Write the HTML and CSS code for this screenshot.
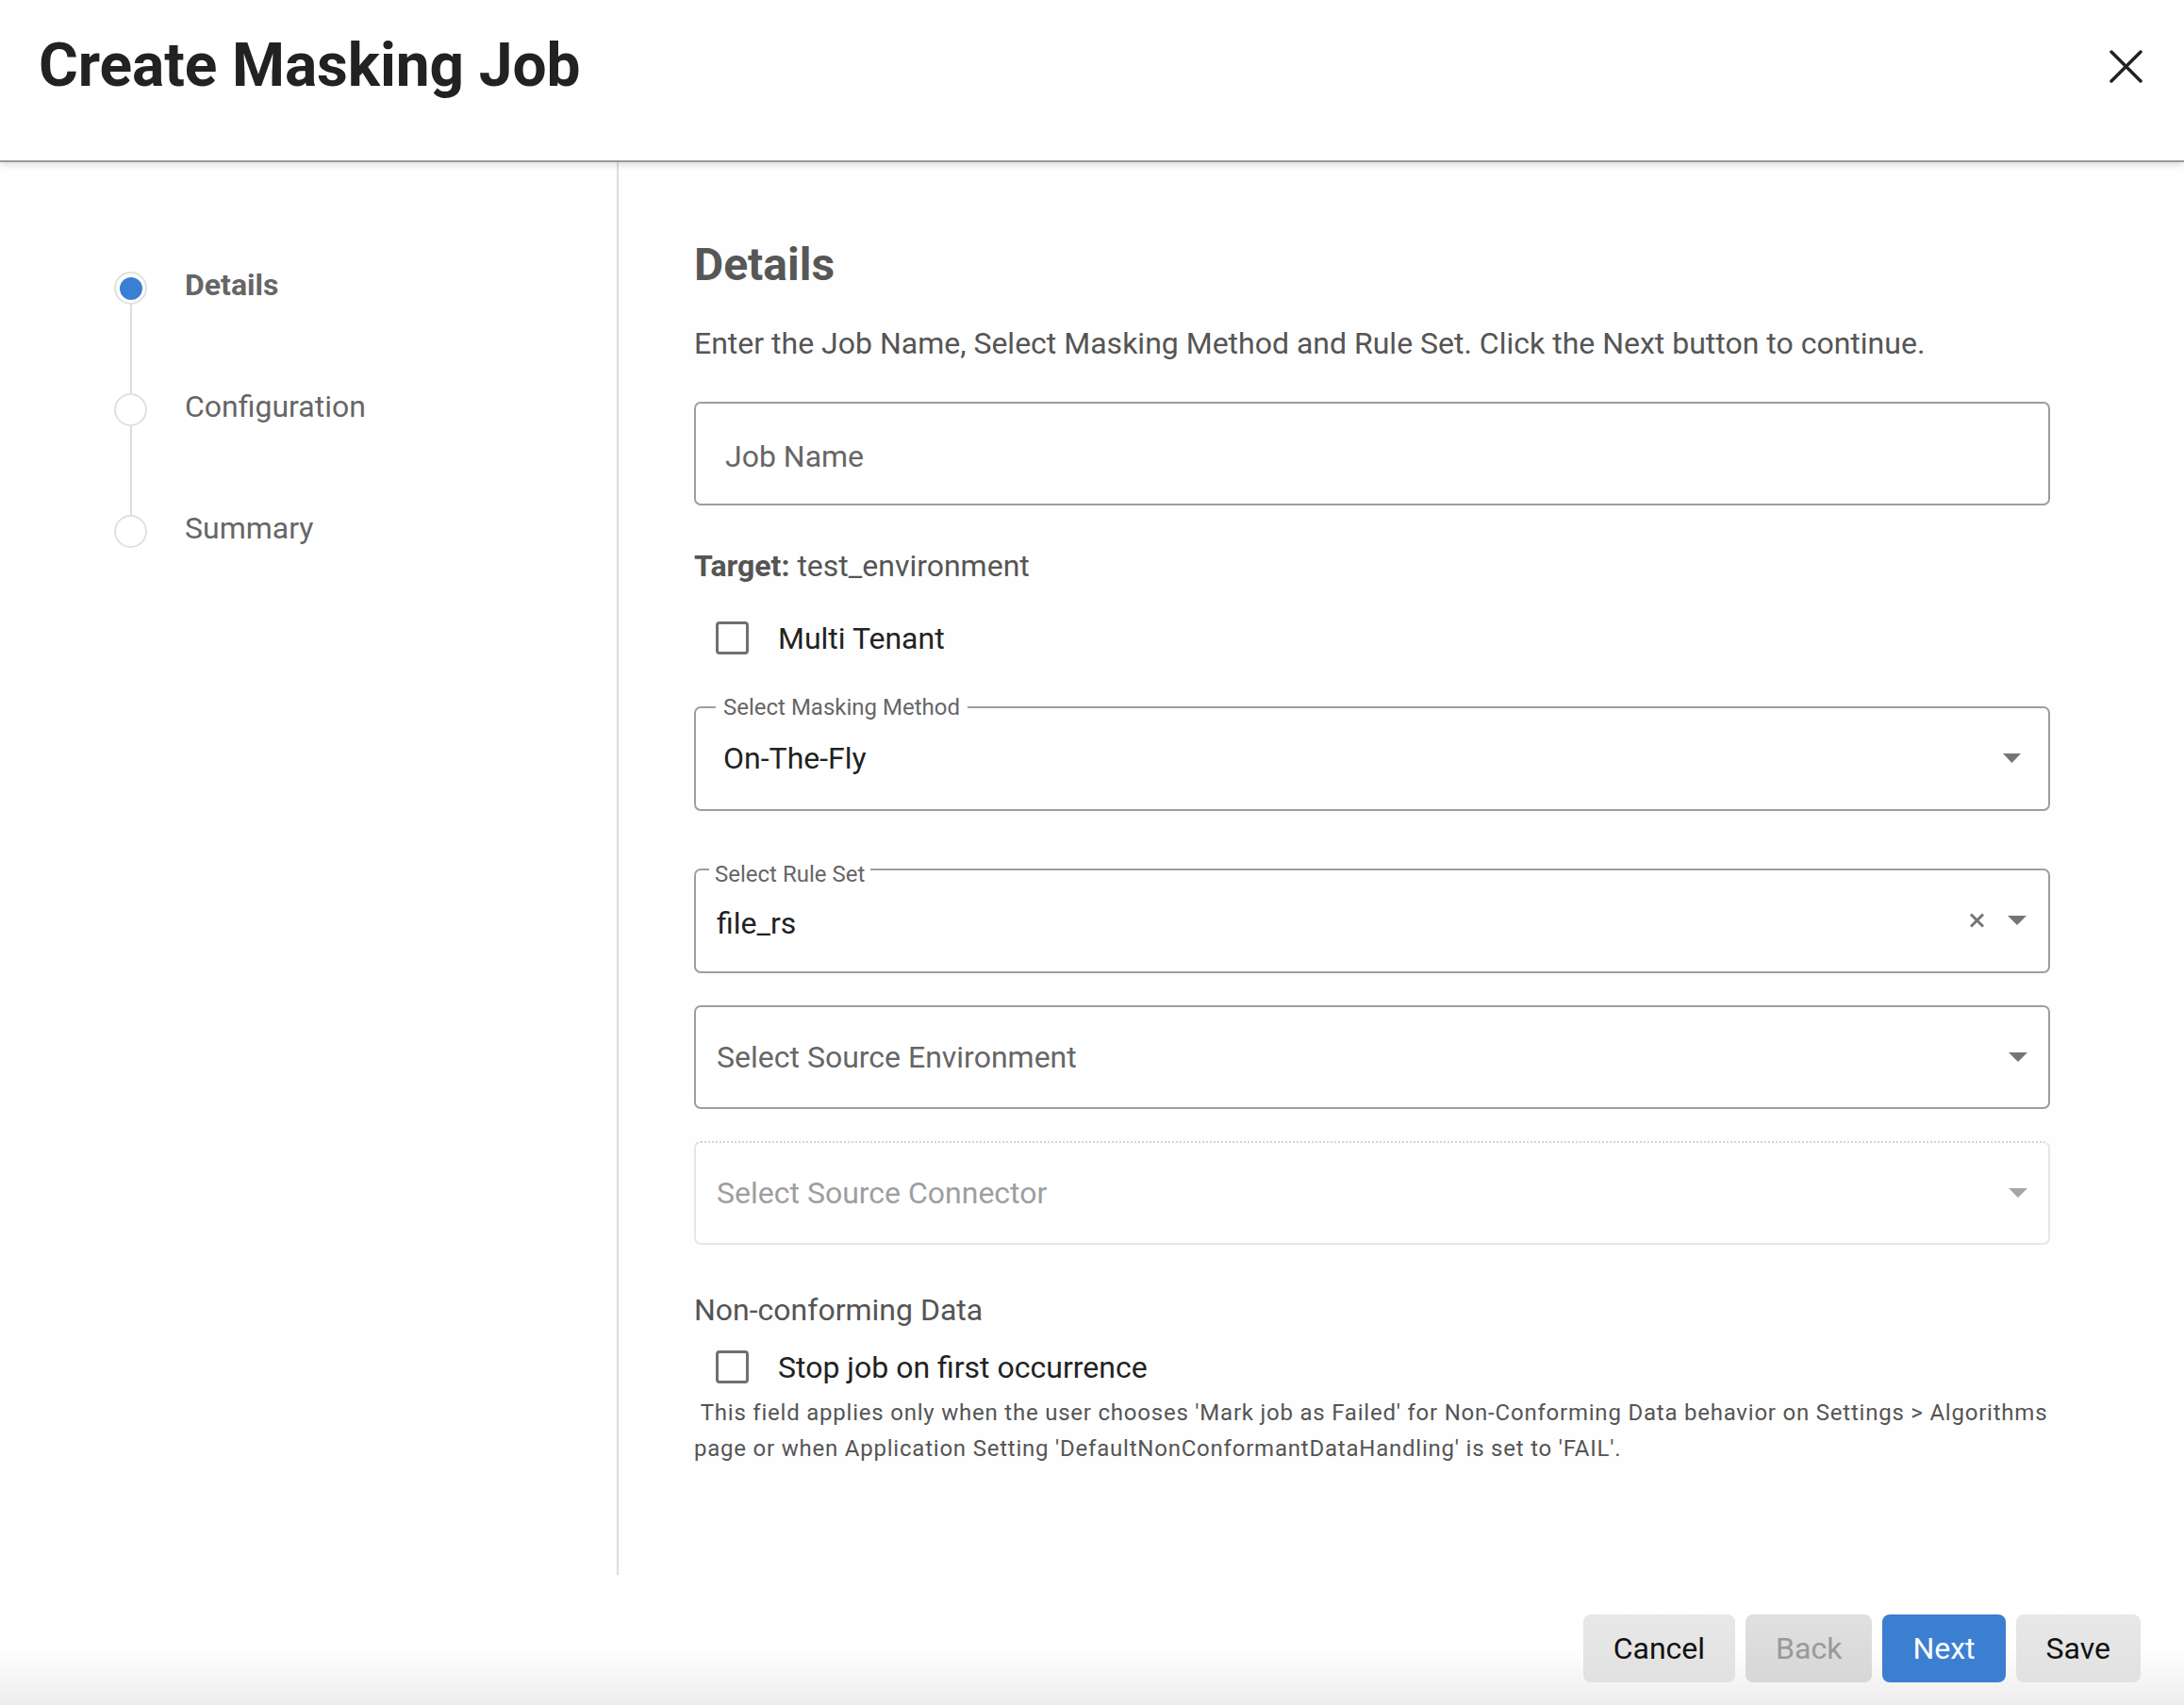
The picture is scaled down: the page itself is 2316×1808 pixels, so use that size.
FILE: index.html
```html
<!DOCTYPE html>
<html lang="en">
<head>
<meta charset="utf-8">
<title>Create Masking Job</title>
<link rel="stylesheet" href="styles.css">
</head>
<body>
<div class="dialog">
  <header class="header">
    <h1 class="title">Create Masking Job</h1>
    <button class="close" aria-label="Close">
      <svg width="35" height="35" viewBox="0 0 35 35"><path d="M2 2 L33 33 M33 2 L2 33" stroke="#222" stroke-width="3.5" stroke-linecap="round" fill="none"/></svg>
    </button>
  </header>
  <div class="body">
    <aside class="sidebar">
      <ol class="stepper">
        <li class="step active"><span class="dot"><span class="dot-inner"></span></span><span class="step-label">Details</span></li>
        <li class="connector"></li>
        <li class="step"><span class="dot"></span><span class="step-label">Configuration</span></li>
        <li class="connector"></li>
        <li class="step"><span class="dot"></span><span class="step-label">Summary</span></li>
      </ol>
    </aside>
    <main class="content">
      <h2 class="heading">Details</h2>
      <p class="subtitle">Enter the Job Name, Select Masking Method and Rule Set. Click the Next button to continue.</p>
      <div class="box job-name"><span class="placeholder">Job Name</span></div>
      <p class="target"><b>Target:</b> test_environment</p>
      <label class="check-row first-check"><span class="checkbox"></span><span class="check-label">Multi Tenant</span></label>
      <fieldset class="outlined method">
        <legend>Select Masking Method</legend>
        <div class="value-row"><span class="value">On-The-Fly</span>
          <svg class="arrow" width="19" height="10" viewBox="0 0 19 10"><path d="M0 0 H19 L9.5 10 Z" fill="#757575"/></svg>
        </div>
      </fieldset>
      <fieldset class="outlined ruleset">
        <legend>Select Rule Set</legend>
        <div class="value-row"><span class="value">file_rs</span>
          <span class="icons">
            <svg class="clear" width="17" height="16" viewBox="0 0 17 16"><path d="M2 1.5 L15 14.5 M15 1.5 L2 14.5" stroke="#757575" stroke-width="3" fill="none"/></svg>
            <svg class="arrow" width="20" height="10" viewBox="0 0 20 10"><path d="M0 0 H20 L10 10 Z" fill="#757575"/></svg>
          </span>
        </div>
      </fieldset>
      <div class="box select env"><span class="select-text">Select Source Environment</span>
        <svg class="arrow" width="20" height="10" viewBox="0 0 20 10"><path d="M0 0 H20 L10 10 Z" fill="#757575"/></svg>
      </div>
      <div class="box select disabled"><span class="select-text">Select Source Connector</span>
        <svg class="arrow" width="20" height="10" viewBox="0 0 20 10"><path d="M0 0 H20 L10 10 Z" fill="#a6a6a6"/></svg>
      </div>
      <p class="section-label">Non-conforming Data</p>
      <label class="check-row second-check"><span class="checkbox"></span><span class="check-label">Stop job on first occurrence</span></label>
      <p class="help">&nbsp;This field applies only when the user chooses 'Mark job as Failed' for Non-Conforming Data behavior on Settings &gt; Algorithms page or when Application Setting 'DefaultNonConformantDataHandling' is set to 'FAIL'.</p>
    </main>
  </div>
  <footer class="footer">
    <button class="btn btn-default">Cancel</button>
    <button class="btn btn-disabled">Back</button>
    <button class="btn btn-primary">Next</button>
    <button class="btn btn-default">Save</button>
  </footer>
</div>
</body>
</html>
```

FILE: styles.css
```css
* { box-sizing: border-box; }
html, body { margin: 0; padding: 0; }
body {
  font-family: Roboto, "Liberation Sans", Arial, sans-serif;
  background: #fff;
  color: #222;
}
.dialog {
  display: flex;
  flex-direction: column;
  height: 1808px;
  width: 2316px;
  overflow: hidden;
}
.header {
  flex: none;
  height: 172px;
  display: flex;
  justify-content: space-between;
  align-items: flex-start;
  padding: 32px 44px 0 41px;
  border-bottom: 2px solid #9a9a9a;
  box-shadow: 0 3px 7px rgba(0,0,0,0.13);
  position: relative;
  z-index: 1;
  background: #fff;
}
.title {
  margin: 0;
  font-size: 64px;
  line-height: 76px;
  font-weight: 700;
  color: #222;
  letter-spacing: -0.1px;
}
.close {
  border: 0;
  background: none;
  padding: 0;
  margin-top: 21px;
  width: 35px;
  height: 35px;
  display: block;
}
.close svg { display: block; }

.body {
  flex: 1;
  display: flex;
  min-height: 0;
}
.sidebar {
  flex: none;
  width: 656px;
  border-right: 2px solid #dcdcdc;
  padding: 116px 0 0 121px;
  background: #fff;
}
.stepper {
  list-style: none;
  margin: 0;
  padding: 0;
  display: flex;
  flex-direction: column;
}
.step {
  display: flex;
  align-items: center;
  height: 35px;
}
.dot {
  flex: none;
  width: 35px;
  height: 35px;
  border-radius: 50%;
  border: 2px solid #e0e0e0;
  background: #fff;
  display: flex;
  align-items: center;
  justify-content: center;
}
.dot-inner {
  width: 24px;
  height: 24px;
  border-radius: 50%;
  background: #3b7fd4;
}
.step-label {
  margin-left: 40px;
  font-size: 32px;
  line-height: 36px;
  color: #666;
  margin-bottom: 8px;
  white-space: nowrap;
}
.step.active .step-label { font-weight: 700; }
.connector {
  width: 2px;
  height: 94px;
  margin-left: 16.5px;
  background: #dcdcdc;
}

.content {
  flex: 1;
  padding: 81px 142px 0 80px;
  background: #fefefe;
}
.heading {
  margin: 0;
  font-size: 48px;
  line-height: 56px;
  font-weight: 700;
  color: #575757;
}
.subtitle {
  margin: 37px 0 0;
  font-size: 32px;
  line-height: 36px;
  color: #555;
}
.box {
  border: 2px solid #9e9e9e;
  border-radius: 7px;
  height: 110px;
  display: flex;
  align-items: center;
  background: #fff;
}
.job-name {
  margin-top: 44px;
  padding-left: 31px;
}
.placeholder {
  font-size: 32px;
  line-height: 36px;
  color: #666;
  margin-top: 6px;
}
.target {
  margin: 46px 0 0;
  font-size: 32px;
  line-height: 36px;
  color: #555;
}
.target b { font-weight: 700; }
.check-row {
  display: flex;
  align-items: center;
  height: 35px;
  padding-left: 23px;
}
.first-check { margin-top: 41px; }
.second-check { margin-top: 25px; }
.checkbox {
  flex: none;
  width: 35px;
  height: 35px;
  border: 3px solid #707070;
  border-radius: 4px;
  background: #fff;
}
.check-label {
  margin-left: 31px;
  font-size: 32px;
  line-height: 36px;
  color: #222;
}
.outlined {
  margin: 0;
  border: 2px solid #9e9e9e;
  border-radius: 7px;
  min-width: 0;
  background: #fff;
}
.outlined legend {
  font-size: 24px;
  line-height: 24px;
  color: #666;
  padding: 0 8px;
}
.value-row {
  display: flex;
  align-items: center;
  justify-content: space-between;
  height: 36px;
}
.value {
  font-size: 32px;
  line-height: 36px;
  color: #222;
}
.arrow { display: block; flex: none; }
.method {
  margin-top: 44px;
  height: 122px;
  padding: 24px 29px 0 21px;
}
.method .value-row { margin-left: 8px; }
.ruleset {
  margin-top: 45px;
  height: 127px;
  padding: 22px 23px 0 14px;
}
.ruleset legend {
  padding: 10px 6px 0;
}
.ruleset .value-row { margin-left: 8px; }
.icons {
  display: flex;
  align-items: center;
  gap: 24px;
  margin-bottom: 7px;
}
.select {
  justify-content: space-between;
  padding: 0 22px;
  margin-top: 34px;
}
.select-text {
  font-size: 32px;
  line-height: 36px;
  color: #666;
}
.disabled {
  border-color: #e6e6e6;
  border-top: 2px dotted #d4d4d4;
}
.disabled .select-text { color: #9e9e9e; }
.section-label {
  margin: 51px 0 0;
  font-size: 32px;
  line-height: 36px;
  color: #555;
}
.help {
  margin: 12px 0 0;
  font-size: 24px;
  line-height: 38px;
  color: #555;
  letter-spacing: 0.78px;
}

.footer {
  flex: none;
  height: 138px;
  display: flex;
  justify-content: flex-end;
  align-items: flex-start;
  gap: 11px;
  padding: 42px 46px 0 0;
  background: linear-gradient(to bottom, #ffffff 0, #ffffff 78px, #ededed 138px);
}
.btn {
  height: 72px;
  padding: 0 32px;
  border: 0;
  border-radius: 8px;
  font-family: Roboto, "Liberation Sans", Arial, sans-serif;
  font-size: 32px;
  line-height: 36px;
}
.btn-default {
  background: linear-gradient(to bottom, #e8e8e8, #e1e1e1);
  color: #111;
}
.btn-disabled {
  background: linear-gradient(to bottom, #e0e0e0, #d7d7d7);
  color: #999;
}
.btn-primary {
  background: #3c7fd1;
  color: #fff;
}
```
